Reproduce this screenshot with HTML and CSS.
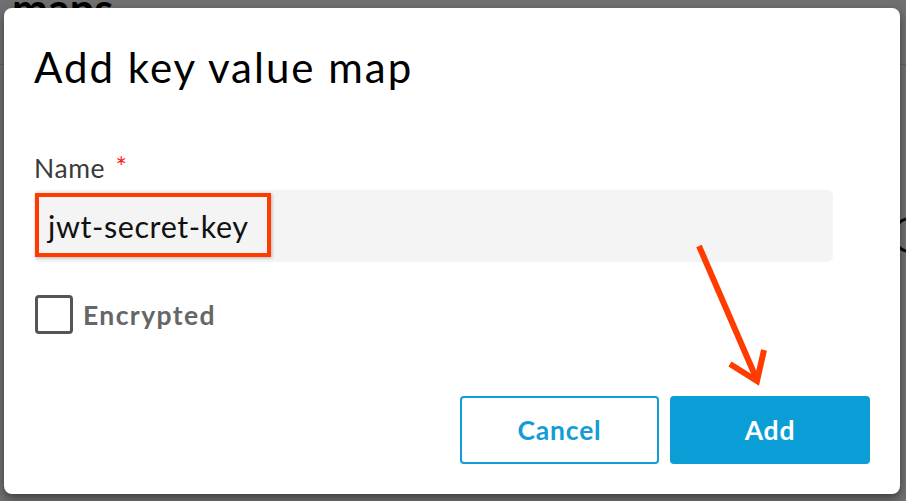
FILE: index.html
```html
<!DOCTYPE html>
<html lang="en">
<head>
<meta charset="utf-8">
<title>Add key value map</title>
<link rel="stylesheet" href="styles.css">
</head>
<body>
<div class="page">
  <header class="page-head">
    <h1 class="page-title">maps</h1>
    <span class="page-icon"></span>
  </header>
</div>
<div class="overlay">
  <div class="dialog">
    <h2 class="dialog-title">Add key value map</h2>
    <div class="field">
      <label class="field-label">Name <span class="req">*</span></label>
      <div class="input-wrap">
        <div class="input">jwt-secret-key</div>
        <span class="highlight"></span>
      </div>
    </div>
    <div class="check-row">
      <span class="checkbox"></span>
      <span class="check-label">Encrypted</span>
    </div>
    <div class="actions">
      <button class="btn btn-outline">Cancel</button>
      <button class="btn btn-primary">Add</button>
    </div>
    <svg class="arrow" width="90" height="160" viewBox="0 0 90 160">
      <g fill="none" stroke="#ff3b00" stroke-width="6" stroke-linecap="butt">
        <line x1="10" y1="12" x2="68" y2="146"/>
        <polyline points="41,130 68,147 75,116"/>
      </g>
    </svg>
  </div>
</div>
</body>
</html>
```

FILE: styles.css
```css
* { box-sizing: border-box; }
html, body { margin: 0; padding: 0; }
body {
  width: 906px;
  height: 501px;
  overflow: hidden;
  font-family: Lato, "Open Sans", sans-serif;
  background: #fff;
  position: relative;
}
.page { height: 501px; }
.page-head {
  height: 65px;
  border-bottom: 1px solid #ddd;
  display: flex;
  align-items: flex-start;
  justify-content: space-between;
}
.page-title {
  margin: -13px 0 0 12px;
  font-size: 43px;
  font-weight: 700;
  color: #000;
  line-height: 1;
}
.page-icon {
  width: 36px;
  height: 36px;
  border: 3px solid #111;
  border-radius: 50%;
  margin: 217px -22px 0 0;
}
.overlay {
  position: absolute;
  inset: 0;
  background: rgba(0, 0, 0, 0.56);
  padding: 8px 6px 7px 4px;
}
.dialog {
  position: relative;
  width: 896px;
  height: 486px;
  background: #fff;
  border-radius: 8px;
  padding: 34px 30px 0 30px;
  box-shadow: 0 4px 10px rgba(0,0,0,0.45);
}
.dialog-title {
  margin: 0;
  font-size: 42px;
  font-weight: 400;
  line-height: 1.2;
  letter-spacing: 2px;
  color: #000;
}
.field { margin-top: 61px; }
.field-label {
  display: block;
  font-size: 26.5px;
  line-height: 1.2;
  letter-spacing: 0.6px;
  color: #3a3a3a;
}
.req {
  color: #ff1a1a;
  font-size: 27px;
  line-height: 1;
  vertical-align: top;
  margin-left: 3px;
}
.input-wrap {
  position: relative;
  margin-top: 5px;
  width: 799px;
}
.input {
  height: 72px;
  background: #f4f4f4;
  border-radius: 6px;
  padding-left: 14px;
  display: flex;
  align-items: center;
  font-size: 30.5px;
  letter-spacing: 0.6px;
  color: #111;
}
.highlight {
  position: absolute;
  left: 1px;
  top: 3px;
  width: 236px;
  height: 64px;
  border: 4px solid #ff3b00;
  box-shadow: 1px 1px 3px rgba(0,0,0,0.25);
}
.check-row {
  margin-top: 33px;
  display: flex;
  align-items: center;
  gap: 10px;
}
.checkbox {
  width: 38px;
  height: 39px;
  border: 3px solid #555;
  border-radius: 4px;
  margin-left: 1px;
}
.check-label {
  font-size: 26.5px;
  font-weight: 700;
  letter-spacing: 1.4px;
  color: #666;
}
.actions {
  margin-top: 62px;
  display: flex;
  justify-content: flex-end;
  gap: 11px;
}
.btn {
  height: 68px;
  border-radius: 4px;
  font-family: Lato, sans-serif;
  font-size: 26.5px;
  font-weight: 700;
  letter-spacing: 0.8px;
  cursor: pointer;
}
.btn-outline {
  width: 199px;
  background: #fff;
  border: 2px solid #139cd6;
  color: #139cd6;
}
.btn-primary {
  width: 200px;
  background: #0b9ed6;
  border: none;
  color: #fff;
}
.arrow {
  position: absolute;
  left: 685px;
  top: 226px;
}
```
